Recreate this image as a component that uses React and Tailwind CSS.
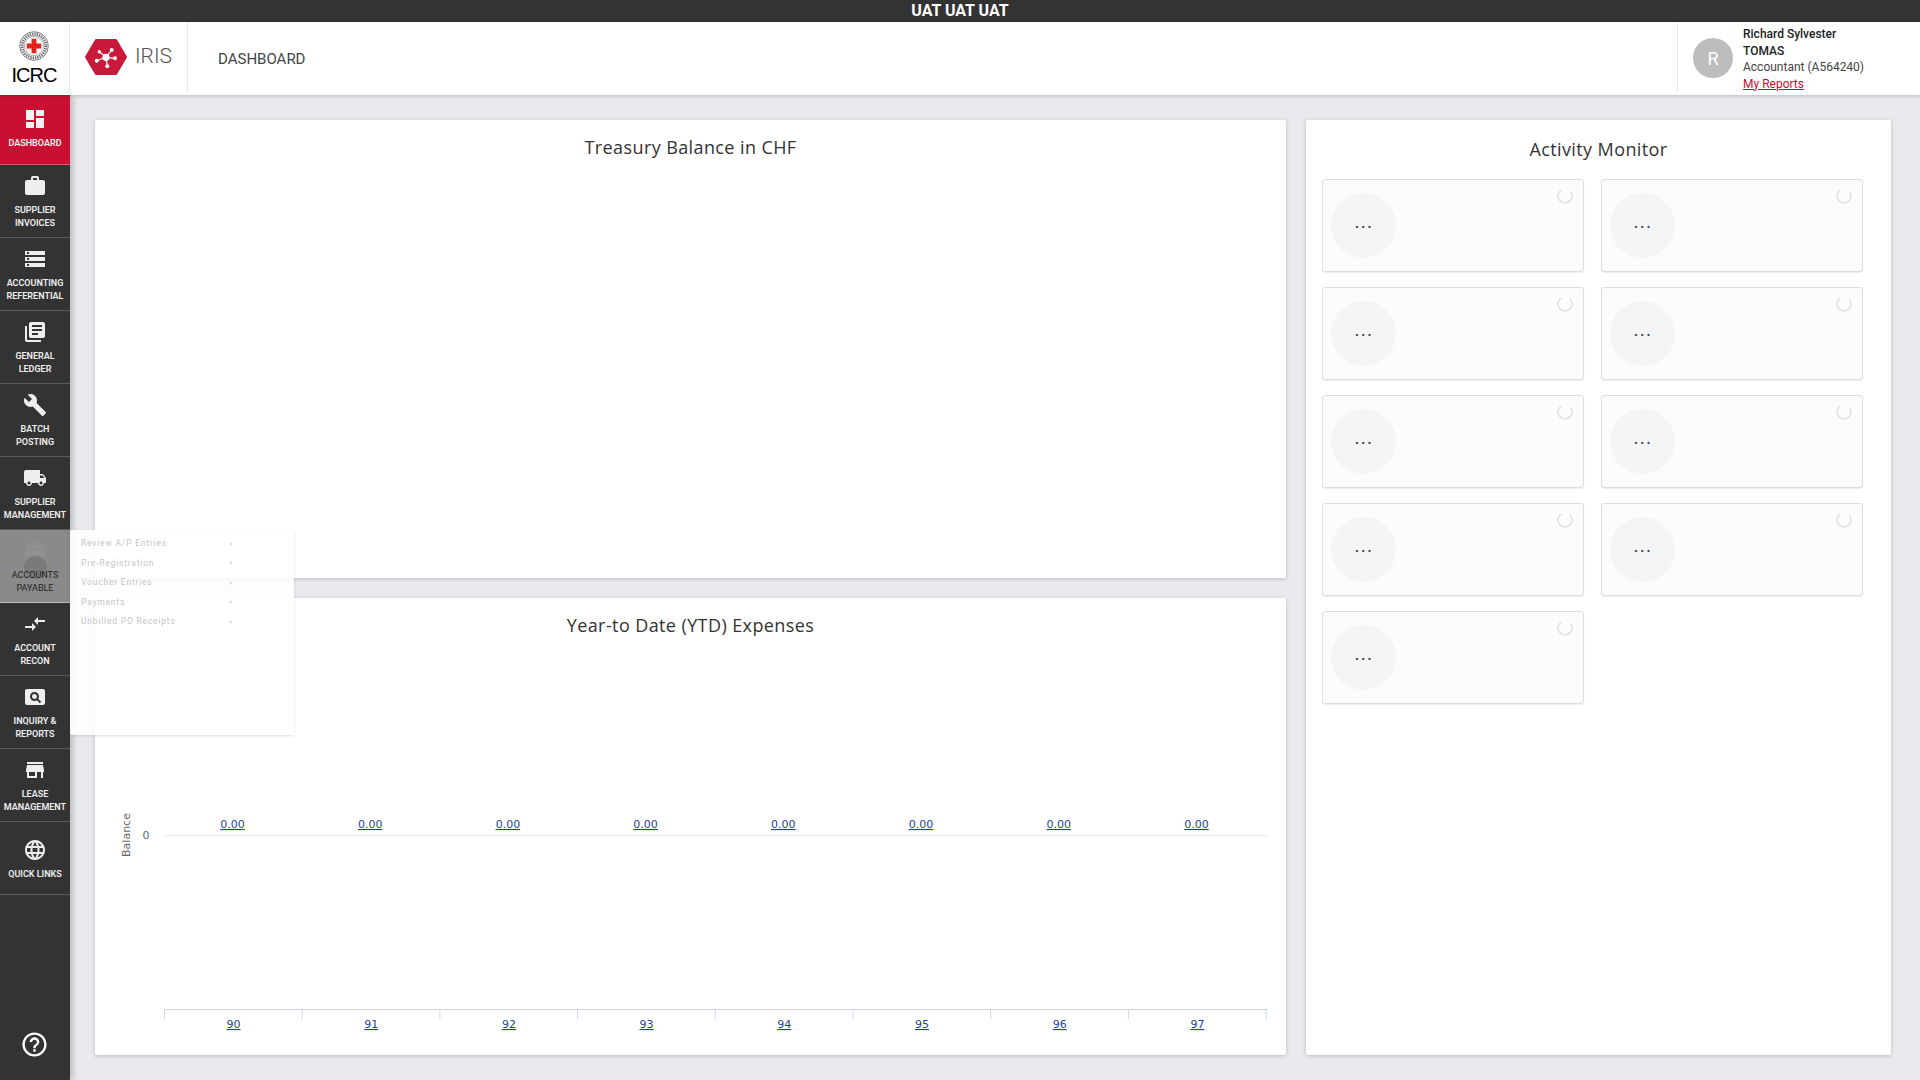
import {
  MdDashboard, MdWork, MdStorage, MdLibraryBooks, MdBuild, MdLocalShipping,
  MdCompareArrows, MdPageview, MdStore, MdLanguage, MdHelpOutline, MdArrowRight,
} from 'react-icons/md'

const navItems = [
  { label: ['Supplier', 'Invoices'], icon: MdWork },
  { label: ['Accounting', 'Referential'], icon: MdStorage },
  { label: ['General', 'Ledger'], icon: MdLibraryBooks },
  { label: ['Batch', 'Posting'], icon: MdBuild },
  { label: ['Supplier', 'Management'], icon: MdLocalShipping },
  { label: ['Accounts', 'Payable'], icon: MdWork, hovered: true },
  { label: ['Account', 'Recon'], icon: MdCompareArrows },
  { label: ['Inquiry &', 'Reports'], icon: MdPageview },
  { label: ['Lease', 'Management'], icon: MdStore },
  { label: ['Quick Links'], icon: MdLanguage },
]

const flyoutItems = ['Review A/P Entries', 'Pre-Registration', 'Voucher Entries', 'Payments', 'Unbilled PO Receipts']
const categories = [90, 91, 92, 93, 94, 95, 96, 97]

function IcrcEmblem() {
  return (
    <svg width="30" height="30" viewBox="0 0 31 31" className="block">
      <circle cx="15.5" cy="15.5" r="14.8" fill="#efefef" stroke="#666" strokeWidth="0.8" />
      <circle cx="15.5" cy="15.5" r="12.2" fill="none" stroke="#666" strokeWidth="3" strokeDasharray="1.2 1.2" />
      <circle cx="15.5" cy="15.5" r="9.800" fill="#fff" stroke="#777" strokeWidth="0.6" />
      <path d="M13 8h5v5h5v5h-5v5h-5v-5H8v-5h5z" fill="#e2231a" />
    </svg>
  )
}

function IrisLogo() {
  return (
    <svg width="42" height="36" viewBox="0 0 42 36" className="block">
      <path d="M11 1h20L41 18 31 35H11L1 18z" fill="#c8193a" stroke="#c8193a" strokeWidth="2" strokeLinejoin="round" />
      <g stroke="#fff" strokeWidth="1.200">
        <path d="M21 18.300 L26.700 11 M21 18.300 L30 19.300 M21 18.300 L22.300 27.300 M21 18.300 L11.700 21.700 M21 18.300 L14.300 12.700" />
      </g>
      <g fill="#fff">
        <circle cx="21" cy="18.300" r="3.600" />
        <circle cx="26.700" cy="11" r="2" />
        <circle cx="30" cy="19.300" r="2" />
        <circle cx="22.300" cy="27.300" r="2" />
        <circle cx="11.700" cy="21.700" r="2" />
        <circle cx="14.300" cy="12.700" r="1.700" />
      </g>
    </svg>
  )
}

function NavItem({ item }) {
  const Icon = item.icon
  if (item.hovered) {
    return (
      <div className="relative h-[73px] shrink-0 flex flex-col items-center justify-center pt-[2px] border-b border-[#bdbdbd] bg-[#8a8a8a] text-[#222]">
        <Icon size={24} className="text-[#909090]" />
        {/* icon is caught mid animation, a dark blob under the briefcase */}
        <div className="absolute left-[24px] top-[26px] w-[23px] h-[23px] rounded-full bg-[#7a7a7a]" />
        <div className="relative mt-[6px] text-center uppercase text-[9px] leading-[13px]">
          {item.label.map((line) => <div key={line}>{line}</div>)}
        </div>
      </div>
    )
  }
  return (
    <div className="h-[73px] shrink-0 flex flex-col items-center justify-center pt-[2px] border-b border-[#5c5c5c] text-[#eeeeee]">
      <Icon size={24} />
      <div className="mt-[6px] text-center uppercase font-semibold text-[9px] leading-[13px] whitespace-nowrap">
        {item.label.map((line) => <div key={line}>{line}</div>)}
      </div>
    </div>
  )
}

function Sidebar() {
  return (
    <aside className="relative z-20 w-[70px] shrink-0 bg-[#333333] flex flex-col shadow-[3px_0_6px_rgba(0,0,0,0.2)]">
      <div className="h-[70px] shrink-0 flex flex-col items-center justify-center pb-[2px] bg-[#c90f32] border-b border-[#e0566f] text-[#f2f2f2]">
        <MdDashboard size={24} />
        <div className="mt-[6px] uppercase font-semibold text-[9px] leading-[13px]">Dashboard</div>
      </div>
      {navItems.map((item) => <NavItem key={item.label.join(' ')} item={item} />)}
      <div className="mt-auto mb-[21px] flex justify-center pr-[2px] text-white">
        <MdHelpOutline size={29} />
      </div>

      {/* flyout is caught mid fade-in */}
      <div className="absolute left-[70px] top-[435px] w-[224px] h-[205px] rounded-[2px] bg-white/90 shadow-[0_1px_3px_rgba(0,0,0,0.12)] pl-[11px] pt-[4px]">
        {flyoutItems.map((name) => (
          <div key={name} className="h-[19.500px] w-[154px] flex items-center justify-between text-[8.500px] tracking-[0.8px] text-[#c4c4c4]">
            <span>{name}</span>
            <MdArrowRight size={8} />
          </div>
        ))}
      </div>
    </aside>
  )
}

function Header() {
  return (
    <header className="relative z-30 h-[73px] shrink-0 bg-white flex shadow-[0_1px_4px_rgba(0,0,0,0.2)]">
      <div className="w-[70px] h-[70px] border-r border-[#e6e6e6] flex flex-col items-center pt-[9px] pr-[1px]">
        <IcrcEmblem />
        <div className="mt-[2px] text-[20px] leading-[24px] tracking-[-1px] text-black font-['Liberation_Sans',sans-serif]">ICRC</div>
      </div>
      <div className="w-[118px] h-[70px] border-r border-[#e6e6e6] flex items-start pl-[15px] pt-[17px]">
        <IrisLogo />
        <span className="ml-[8px] mt-[4px] text-[21px] leading-[26px] font-light text-[#555]">IRIS</span>
      </div>
      <div className="pl-[30px] pt-[28px] text-[15px] leading-[18px] text-[#444]">DASHBOARD</div>
      <div className="ml-auto w-[243px] h-[70px] border-l border-[#e6e6e6] flex pl-[15px]">
        <div className="mt-[16px] w-[40px] h-[40px] rounded-full bg-[#bdbdbd] flex items-center justify-center text-white text-[18px]">R</div>
        <div className="ml-[10px] pt-[4px] text-[12px] leading-[16.600px] text-[#444]">
          <div className="font-medium text-[#222]">Richard Sylvester</div>
          <div className="font-medium text-[#222]">TOMAS</div>
          <div>Accountant (A564240)</div>
          <div className="text-[#c8102e] underline">My Reports</div>
        </div>
      </div>
    </header>
  )
}

function Card({ className, children }) {
  return (
    <section className={`bg-white rounded-[2px] shadow-[0_1px_4px_rgba(0,0,0,0.2)] ${className}`}>{children}</section>
  )
}

function ChartTitle({ children }) {
  return (
    <h2 className="pt-[15px] text-center text-[18px] leading-[24px] tracking-[0.4px] text-[#333] font-['Open_Sans',sans-serif]">
      {children}
    </h2>
  )
}

function ExpensesChart() {
  const left = 69.5
  const step = 137.7
  return (
    <svg width="1191" height="418" className="block font-['DejaVu_Sans',sans-serif]">
      <line x1={left} x2="1172" y1="198.500" y2="198.500" stroke="#e6e6e6" />
      <line x1={left} x2="1172" y1="372.500" y2="372.500" stroke="#ccd6eb" />
      {Array.from({ length: 9 }, (_, i) => (
        <line key={i} x1={left + i * step} x2={left + i * step} y1="372" y2="382" stroke="#ccd6eb" />
      ))}
      {categories.map((cat, i) => (
        <g key={cat} fill="#1a44a0" fontSize="11" textAnchor="middle" textDecoration="underline">
          <text x={left + i * step + 68} y="191">0.00</text>
          <text x={left + i * step + 69} y="391">{cat}</text>
        </g>
      ))}
      <text x="51" y="202" fontSize="11" fill="#666" textAnchor="middle">0</text>
      <text transform="translate(35 198) rotate(-90)" fontSize="11" fill="#666" textAnchor="middle">Balance</text>
    </svg>
  )
}

function ActivityTile() {
  return (
    <div className="relative h-[93px] rounded-[3px] border border-[#dedede] bg-[#fcfcfc] shadow-[0_1px_1px_rgba(0,0,0,0.08)] pl-[8px] pt-[13px]">
      <div className="w-[65px] h-[65px] rounded-full bg-[#f5f5f5] flex items-center justify-center pl-[2px] pb-[5px] text-[#444] font-bold text-[14px] tracking-[2.200px]">...</div>
      <svg width="16" height="16" viewBox="0 0 16 16" className="absolute right-[10px] top-[8px]">
        <path d="M4.500 1.800a7 7 0 1 0 8.800 1.500" fill="none" stroke="#e0e0e0" strokeWidth="1.500" />
      </svg>
    </div>
  )
}

function App() {
  return (
    <div className="h-screen w-full overflow-hidden flex flex-col bg-[#e8eaed] font-['Roboto',sans-serif]">
      <div className="h-[22px] shrink-0 bg-[#333333] text-center text-white font-bold text-[16px] leading-[22px]">UAT UAT UAT</div>
      <Header />
      <div className="flex flex-1 min-h-0">
        <Sidebar />
        <main className="flex-1 flex gap-[19px] pl-[25px] pt-[25px] pb-[25px]">
          <div className="w-[1191px] flex flex-col gap-[20px]">
            <Card className="h-[458px]">
              <ChartTitle>Treasury Balance in CHF</ChartTitle>
            </Card>
            <Card className="h-[457px]">
              <ChartTitle>Year-to Date (YTD) Expenses</ChartTitle>
              <ExpensesChart />
            </Card>
          </div>
          <Card className="w-[585px] ml-[1px] pt-[17px]">
            <h2 className="text-center text-[18px] leading-[24px] tracking-[0.4px] text-[#333] font-['Open_Sans',sans-serif]">Activity Monitor</h2>
            <div className="mt-[18px] pl-[16px] pr-[28px] grid grid-cols-2 gap-x-[17px] gap-y-[15px]">
              {Array.from({ length: 9 }, (_, i) => <ActivityTile key={i} />)}
            </div>
          </Card>
        </main>
      </div>
    </div>
  )
}

export default App
